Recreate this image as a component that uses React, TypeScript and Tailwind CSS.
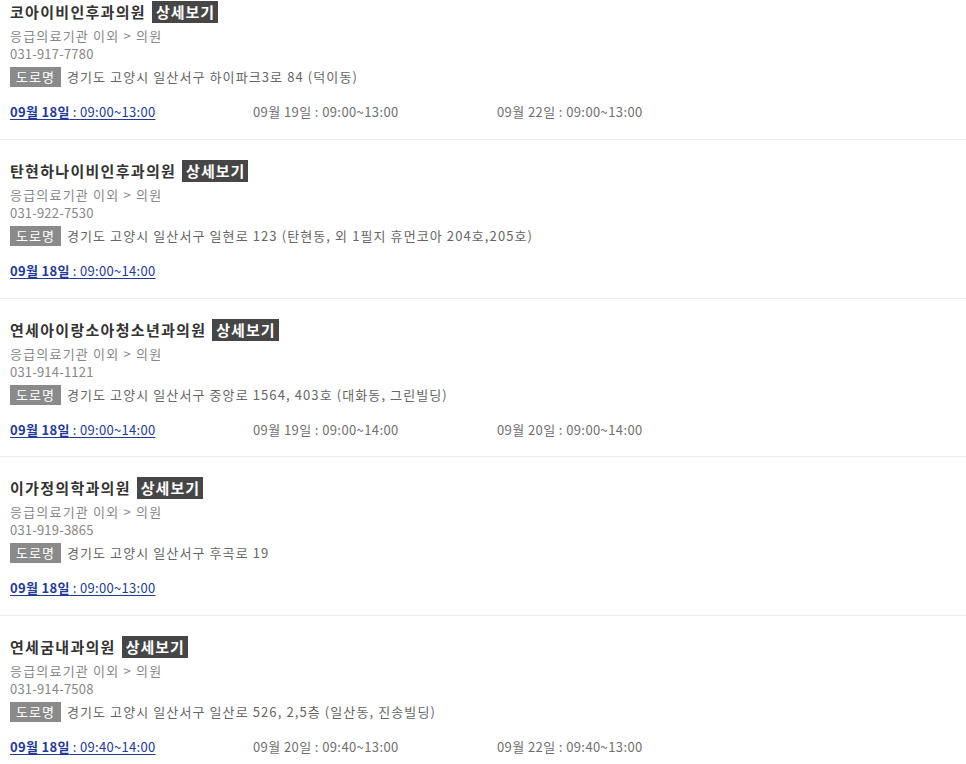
import React from "react";

type Item = {
  name: string;
  phone: string;
  addr: string;
  dates: [string, string][];
};

const items: Item[] = [
  {
    name: "코아이비인후과의원",
    phone: "031-917-7780",
    addr: "경기도 고양시 일산서구 하이파크3로 84 (덕이동)",
    dates: [
      ["09월 18일", "09:00~13:00"],
      ["09월 19일", "09:00~13:00"],
      ["09월 22일", "09:00~13:00"],
    ],
  },
  {
    name: "탄현하나이비인후과의원",
    phone: "031-922-7530",
    addr: "경기도 고양시 일산서구 일현로 123 (탄현동, 외 1필지 휴먼코아 204호,205호)",
    dates: [["09월 18일", "09:00~14:00"]],
  },
  {
    name: "연세아이랑소아청소년과의원",
    phone: "031-914-1121",
    addr: "경기도 고양시 일산서구 중앙로 1564, 403호 (대화동, 그린빌딩)",
    dates: [
      ["09월 18일", "09:00~14:00"],
      ["09월 19일", "09:00~14:00"],
      ["09월 20일", "09:00~14:00"],
    ],
  },
  {
    name: "이가정의학과의원",
    phone: "031-919-3865",
    addr: "경기도 고양시 일산서구 후곡로 19",
    dates: [["09월 18일", "09:00~13:00"]],
  },
  {
    name: "연세굼내과의원",
    phone: "031-914-7508",
    addr: "경기도 고양시 일산서구 일산로 526, 2,5층 (일산동, 진송빌딩)",
    dates: [
      ["09월 18일", "09:40~14:00"],
      ["09월 20일", "09:40~13:00"],
      ["09월 22일", "09:40~13:00"],
    ],
  },
];

function Card({ item }: { item: Item }) {
  return (
    <div className="border-t border-[#ececec] pl-[10px] pt-[20px] pb-[16.8px]">
      <div className="flex items-center h-[22px]">
        <span className="text-[15px] font-semibold text-[#333] leading-[22px] tracking-[1.3px]">{item.name}</span>
        <span className="ml-[6px] bg-[#464646] text-white text-[15px] font-bold leading-[22px] pl-[4px] pr-[3px] tracking-[1px]">
          상세보기
        </span>
      </div>
      <div className="mt-[4px] text-[13px] leading-[18px] text-[#888] tracking-[1.2px]">응급의료기관 이외 &gt; 의원</div>
      <div className="text-[13px] leading-[18px] text-[#888] tracking-[0.2px]">{item.phone}</div>
      <div className="mt-[4px] flex items-center h-[20px]">
        <span className="bg-[#8a8a8a] text-white text-[13px] leading-[20px] px-[6px] tracking-[1px]">도로명</span>
        <span className="ml-[6px] text-[13px] leading-[20px] text-[#666] tracking-[1.1px]">{item.addr}</span>
      </div>
      <div className="mt-[15px] flex h-[20px] items-center">
        {item.dates.map(([d, t], i) =>
          i === 0 ? (
            <span key={i} className="w-[243px] text-[13px] leading-[20px] text-[#23399a] underline underline-offset-2 tracking-[0.3px]">
              <span className="font-bold">{d}</span> : {t}
            </span>
          ) : (
            <span key={i} className="w-[244px] text-[13px] leading-[20px] text-[#6f6f6f] tracking-[0.4px]">
              {d} : {t}
            </span>
          )
        )}
      </div>
    </div>
  );
}

export default function App() {
  return (
    <div
      className="w-[966px] h-[764px] overflow-hidden bg-white"
      style={{ fontFamily: '"Noto Sans CJK KR", "Noto Sans", sans-serif' }}
    >
      <div className="-mt-[20px]">
        {items.map((it, i) => (
          <Card key={i} item={it} />
        ))}
      </div>
    </div>
  );
}
